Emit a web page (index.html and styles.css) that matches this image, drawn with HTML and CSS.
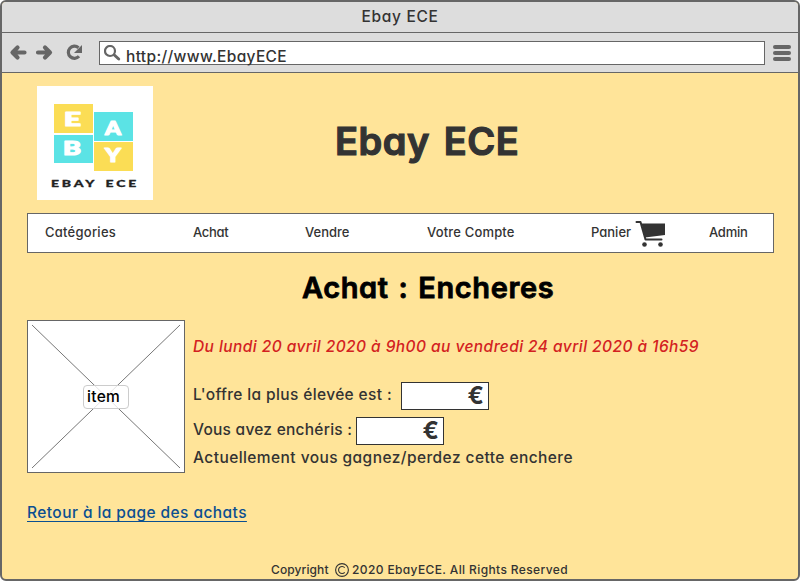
FILE: index.html
```html
<!DOCTYPE html>
<html lang="fr">
<head>
<meta charset="utf-8">
<title>Ebay ECE</title>
<link rel="stylesheet" href="styles.css">
</head>
<body>
<div class="window">
  <div class="titlebar"><span>Ebay ECE</span></div>
  <div class="toolbar">
    <svg class="nav-icons" width="82" height="20" viewBox="0 0 82 20" fill="none" stroke="#666">
      <path d="M9.500 4.500 4.500 9.500l5 5M5 9.500h11.500" stroke-width="4.200" stroke-linecap="round" stroke-linejoin="round"/>
      <path d="M37 4.500l5 5-5 5M41.500 9.500H30" stroke-width="4.200" stroke-linecap="round" stroke-linejoin="round"/>
      <path d="M70.500 4.700A6.100 6.100 0 1 0 71 13.300" stroke-width="3.200"/>
      <path d="M74 2v8h-8z" fill="#666" stroke="none"/>
    </svg>
    <div class="address">
      <svg width="18" height="18" viewBox="0 0 18 18" fill="none" stroke="#666">
        <circle cx="6" cy="6" r="5" stroke-width="2.200"/>
        <path d="M10.300 10l4.400 4" stroke-width="3" stroke-linecap="round"/>
      </svg>
      <span class="url">http://www.EbayECE</span>
    </div>
    <div class="burger"><i></i><i></i><i></i></div>
  </div>
  <main class="page">
    <header class="brand">
      <svg class="logo" width="116" height="114" viewBox="0 0 116 114">
        <rect width="116" height="114" fill="#fff"/>
        <path d="M17 18h39v29H17zM57 56h39v29H57z" fill="#fbdd55"/>
        <path d="M17 49h39v28H17zM57 26h39v29H57z" fill="#5be3e5"/>
        <g class="logo-letters">
          <text x="27" y="40" textLength="17" lengthAdjust="spacingAndGlyphs">E</text>
          <text x="26" y="69" textLength="18" lengthAdjust="spacingAndGlyphs">B</text>
          <text x="68" y="49" textLength="16" lengthAdjust="spacingAndGlyphs">A</text>
          <text x="68" y="76" textLength="16" lengthAdjust="spacingAndGlyphs">Y</text>
        </g>
        <text class="logo-name" x="14" y="101" textLength="88" lengthAdjust="spacingAndGlyphs">EBAY ECE</text>
      </svg>
      <h1>Ebay ECE</h1>
    </header>
    <nav class="menu">
      <a class="cat">Catégories</a>
      <a class="buy">Achat</a>
      <a class="sell">Vendre</a>
      <a class="account">Votre Compte</a>
      <a class="cart">Panier</a>
      <svg class="cart-icon" width="32" height="28" viewBox="0 0 32 28">
        <path d="M1.500 2h4l5 17.500h16" fill="none" stroke="#333" stroke-width="2" stroke-linecap="round" stroke-linejoin="round"/>
        <path d="M6.500 3.500H30v11.500L10 17.500z" fill="#333"/>
        <circle cx="9.500" cy="24.500" r="2.300" fill="#333"/><circle cx="25.500" cy="24.500" r="2.300" fill="#333"/>
      </svg>
      <a class="admin">Admin</a>
    </nav>
    <h2>Achat : Encheres</h2>
    <section class="auction">
      <div class="picture">
        <svg width="156" height="151" viewBox="0 0 156 151"><path d="M4 4l148 143M152 4L4 147" stroke="#777" stroke-width="1"/></svg>
        <span class="item">item</span>
      </div>
      <div class="details">
        <p class="dates">Du lundi 20 avril 2020 à 9h00 au vendredi 24 avril 2020 à 16h59</p>
        <p class="row best"><span>L'offre la plus élevée est :</span><b class="amount">€</b></p>
        <p class="row mine"><span>Vous avez enchéris :</span><b class="amount">€</b></p>
        <p class="status">Actuellement vous gagnez/perdez cette enchere</p>
      </div>
    </section>
    <div class="back"><a>Retour à la page des achats</a></div>
    <footer><span class="copy">Copyright</span><svg width="16" height="16" viewBox="0 0 16 16" fill="none" stroke="#333" stroke-width="1.100"><circle cx="8" cy="8" r="6.400"/><path d="M10.700 5.700a3.500 3.500 0 1 0 0 4.600"/></svg><span class="rights">2020 EbayECE. All Rights Reserved</span></footer>
  </main>
</div>
</body>
</html>
```
FILE: styles.css
```css
* { box-sizing: border-box; }
body { margin: 0; background: #fff; color: #333; font: 500 15.5px/20px Inter, "Liberation Sans", sans-serif; letter-spacing: .43px; font-feature-settings: "cv11"; white-space: nowrap; }
h1, h2, p { margin: 0; }
svg { display: block; flex: none; }
.window { width: 800px; height: 581px; border: 2px solid #666; border-radius: 6px; background: #ffe499; overflow: hidden; }
.titlebar { height: 31px; padding-top: 5px; background: #ddd; border-bottom: 1px solid #666; text-align: center; letter-spacing: .7px; }
.toolbar { height: 40px; display: flex; align-items: flex-start; padding: 8px 7px 0 6px; background: #ddd; border-bottom: 1px solid #666; }
.nav-icons { margin: 2px 9px 0 0; }
.address { width: 666px; height: 24px; display: flex; border: 1px solid #666; background: #fff; padding: 3px 4px 0; }
.url { margin: 2px 0 0 4px; letter-spacing: .34px; }
.burger { width: 18px; margin: 4px 0 0 8px; display: grid; gap: 2px; }
.burger i { height: 4px; border-radius: 2px; background: #666; }
.page { height: 506px; padding: 13px 24px 0 25px; }
.brand { display: flex; height: 127px; padding-left: 10px; }
.logo-letters, .logo-name { letter-spacing: 0; stroke-linejoin: round; }
.logo-letters { font: 900 19px Lato, sans-serif; fill: #fff; stroke: #fff; stroke-width: 1.200px; }
.logo-name { font: 900 10px Lato, sans-serif; fill: #222; stroke: #222; stroke-width: .3px; word-spacing: 2px; letter-spacing: 2px; }
h1 { margin: 32px 0 0 182px; font-size: 38px; line-height: 46px; font-weight: 600; letter-spacing: .5px; word-spacing: 4px; -webkit-text-stroke: 1.2px #333; }
.menu { display: flex; height: 40px; padding: 8px 0 0 17px; border: 1px solid #666; background: #fff; font-size: 13px; letter-spacing: .12px; }
.cat { width: 148px; letter-spacing: .25px; }
.buy { width: 112px; letter-spacing: -.3px; }
.sell { width: 122px; letter-spacing: 0; }
.account { width: 164px; letter-spacing: .17px; }
.cart { width: 44px; letter-spacing: 0; }
.admin { letter-spacing: -.25px; }
.cart-icon { margin-top: -2px; margin-right: 42px; }
h2 { padding-left: 275px; margin-top: 16px; height: 51px; font-size: 29px; line-height: 38px; font-weight: 600; letter-spacing: .6px; word-spacing: 2px; color: #000; -webkit-text-stroke: .8px #000; }
.auction { display: flex; gap: 8px; }
.picture { display: grid; width: 158px; height: 153px; border: 1px solid #666; background: #fff; place-items: center; }
.picture svg, .item { grid-area: 1 / 1; }
.item { z-index: 1; width: 46px; height: 24px; border: 1px solid #ccc; border-radius: 4px; background: #ffffffcc; padding-left: 3px; line-height: 22px; letter-spacing: .3px; color: #000; }
.dates { margin-top: 17px; height: 45px; font-style: italic; color: #d32121; }
.row { display: flex; height: 35px; line-height: 26px; }
.amount { width: 88px; height: 28px; padding-right: 4px; border: 1px solid #333; background: #fff; font-size: 24px; text-align: right; letter-spacing: 0; line-height: 26px; }
.best span { width: 208px; letter-spacing: .37px; }
.mine span { width: 163px; letter-spacing: .25px; }
.status { margin-top: -7px; line-height: 26px; }
.back { margin-top: 30px; color: #0b4f91; }
.back a { text-decoration: underline 1px #0b4f91; text-underline-offset: 3px; text-decoration-skip-ink: none; }
footer { display: flex; margin-top: 39px; padding-left: 244px; font-size: 12px; line-height: 16px; letter-spacing: .38px; }
.copy { width: 63px; letter-spacing: .1px; }
.rights { margin-left: 2px; }
```
